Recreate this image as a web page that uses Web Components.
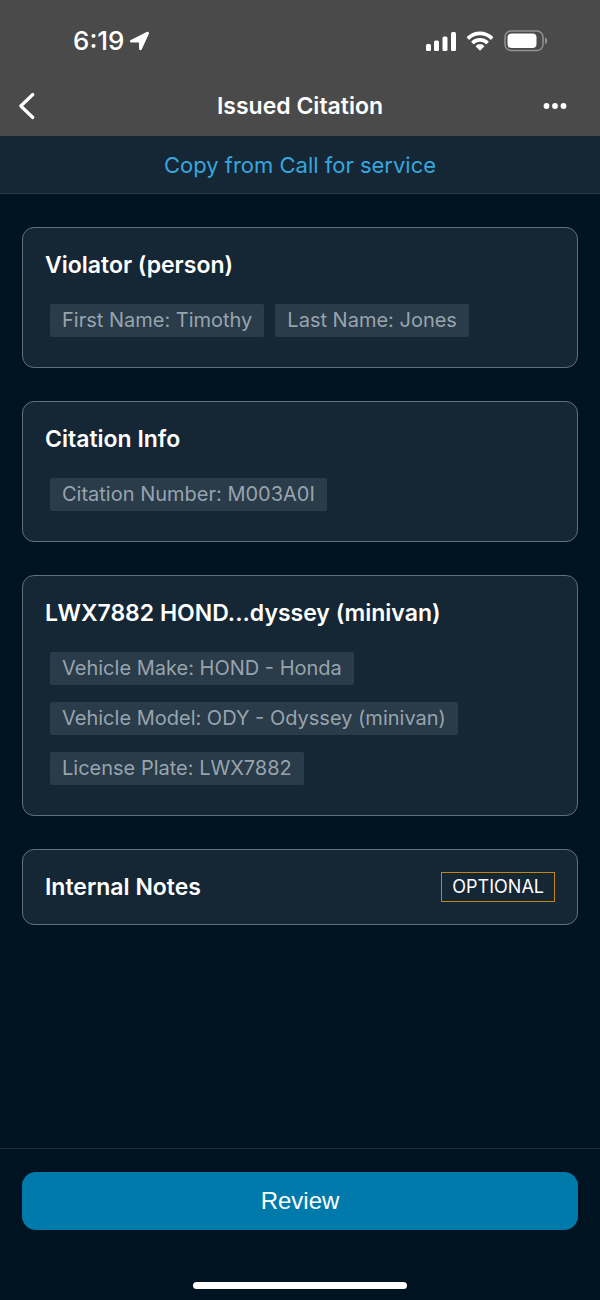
<!DOCTYPE html>
<html lang="en">
<head>
<meta charset="utf-8">
<meta name="viewport" content="width=device-width, initial-scale=1">
<title>Issued Citation</title>
<style>
	:root {
		--page: #001321;
		--surface: #152635;
		--bar: #4a4a4a;
		--line: #1f303d;
		--outline: #61707c;
		--chip: #2a3b49;
		--muted: #98a4ad;
		--link: #37a6de;
		--primary: #007aab;
		--warn: #c2870f;
		--gutter: 22px;
	}

	body {
		margin: 0;
		background: var(--page);
		color: #fff;
		font-family: Inter, "Liberation Sans", sans-serif;
	}
</style>
</head>
<body>
<citation-screen>
	<status-bar slot="top" time="6:19"></status-bar>
	<nav-bar slot="top">Issued Citation</nav-bar>
	<link-bar slot="top">Copy from Call for service</link-bar>

	<info-card heading="Violator (person)">
		<info-chip>First Name: Timothy</info-chip>
		<info-chip>Last Name: Jones</info-chip>
	</info-card>
	<info-card heading="Citation Info">
		<info-chip>Citation Number: M003A0I</info-chip>
	</info-card>
	<info-card heading="LWX7882 HOND...dyssey (minivan)">
		<info-chip>Vehicle Make: HOND - Honda</info-chip>
		<info-chip>Vehicle Model: ODY - Odyssey (minivan)</info-chip>
		<info-chip>License Plate: LWX7882</info-chip>
	</info-card>
	<info-card heading="Internal Notes">
		<tag-badge slot="badge">OPTIONAL</tag-badge>
	</info-card>

	<action-footer slot="bottom">Review</action-footer>
</citation-screen>

<script>
class CitationScreen extends HTMLElement {
	constructor() {
		super();
		this.attachShadow({ mode: "open" }).innerHTML = `
			<style>
				:host {
					display: flex;
					flex-direction: column;
					min-height: 100vh;
				}

				main {
					flex: 1;
					display: flex;
					flex-direction: column;
					gap: 33px;
					padding: 33px var(--gutter);
				}
			</style>
			<slot name="top"></slot>
			<main><slot></slot></main>
			<slot name="bottom"></slot>
		`;
	}
}

class StatusBar extends HTMLElement {
	constructor() {
		super();
		this.attachShadow({ mode: "open" }).innerHTML = `
			<style>
				:host {
					display: flex;
					align-items: center;
					justify-content: space-between;
					padding: 24px 52px 18px 73px;
					background: var(--bar);
				}

				.time, .icons { display: flex; align-items: center; }
				.time {
					gap: 5px;
					font-size: 26px;
					line-height: 34px;
					font-weight: 500;
				}
				.icons { gap: 10px; }
				svg { display: block; fill: #fff; }
			</style>
			<div class="time">
				<span>${this.getAttribute("time")}</span>
				<svg width="21" height="20" viewBox="0 0 21 20" aria-hidden="true">
					<path d="M1.800 9 17.600 1c1.700-.8 3 .4 2.200 2.100L12.800 18.300c-.7 1.500-2.600 1.200-2.700-.5l-.2-6.300-7.400-.1c-1.900 0-2.200-1.600-.7-2.400z"/>
				</svg>
			</div>
			<div class="icons">
				<svg width="32" height="20" viewBox="0 0 32 20" aria-hidden="true">
					<rect x="2" y="13" width="5" height="7" rx="1.500"/>
					<rect x="10" y="9.500" width="5" height="10.500" rx="1.500"/>
					<rect x="18.500" y="5.500" width="5" height="14.500" rx="1.500"/>
					<rect x="27" y="1" width="5" height="19" rx="1.500"/>
				</svg>
				<svg width="28" height="20" viewBox="0 0 28 20" aria-hidden="true">
					<path d="M14 .5c5 0 9.600 2 13 5.200.3.300.3.700 0 1l-1.700 1.700c-.3.300-.7.300-1 0A15 15 0 0 0 14 4.300 15 15 0 0 0 3.700 8.400c-.3.300-.7.300-1 0L1 6.700c-.3-.3-.3-.7 0-1A18.800 18.800 0 0 1 14 .5z"/>
					<path d="M14 7c3.200 0 6.200 1.200 8.500 3.300.3.300.3.700 0 1L20.700 13c-.3.300-.6.300-.9 0a8.600 8.600 0 0 0-11.600 0c-.3.300-.6.300-.9 0l-1.800-1.700c-.3-.3-.3-.7 0-1A12.500 12.500 0 0 1 14 7z"/>
					<path d="M14 13.300c1.500 0 2.900.5 4 1.400.3.300.3.700 0 1l-3.500 3.500c-.3.300-.7.300-1 0L10 15.700c-.3-.3-.3-.7 0-1 1.100-.9 2.500-1.400 4-1.400z"/>
				</svg>
				<svg width="44" height="22" viewBox="0 0 44 22" aria-hidden="true">
					<rect x="1" y="1" width="38" height="19.500" rx="6" fill="none" stroke="#929292" stroke-width="1.500"/>
					<rect x="3.500" y="3.500" width="29" height="14.500" rx="4"/>
					<path d="M41 7.500c3 1.200 3 5.500 0 6.700z" fill="#929292"/>
				</svg>
			</div>
		`;
	}
}

class NavBar extends HTMLElement {
	constructor() {
		super();
		this.attachShadow({ mode: "open" }).innerHTML = `
			<style>
				:host { display: block; }

				header {
					display: grid;
					grid-template-columns: 60px 1fr 60px;
					align-items: center;
					height: 60px;
					background: var(--bar);
				}

				h1 {
					margin: 0;
					font-size: 23px;
					line-height: 30px;
					font-weight: 600;
					text-align: center;
				}

				button {
					display: flex;
					align-items: center;
					height: 48px;
					margin: 0;
					padding: 0 18px;
					border: 0;
					background: none;
					color: inherit;
				}
				.menu {
					justify-content: flex-end;
					padding: 0 33px 0 0;
				}
				svg { display: block; flex: none; }
			</style>
			<header>
				<button type="button" aria-label="Back">
					<svg width="18" height="28" viewBox="0 0 18 28" fill="none" stroke="currentColor" stroke-width="3.200" stroke-linecap="round" stroke-linejoin="round">
						<path d="M14.800 2.500 2.800 14l12 11.500"/>
					</svg>
				</button>
				<h1><slot></slot></h1>
				<button class="menu" type="button" aria-label="More">
					<svg width="24" height="8" viewBox="0 0 24 8" fill="currentColor">
						<circle cx="3.500" cy="4" r="2.900"/>
						<circle cx="12" cy="4" r="2.900"/>
						<circle cx="20.500" cy="4" r="2.900"/>
					</svg>
				</button>
			</header>
		`;
	}
}

class LinkBar extends HTMLElement {
	constructor() {
		super();
		this.attachShadow({ mode: "open" }).innerHTML = `
			<style>
				:host { display: block; }

				button {
					display: block;
					width: 100%;
					margin: 0;
					padding: 14px 0 13px;
					border: 0;
					border-bottom: 1px solid var(--chip);
					background: var(--surface);
					color: var(--link);
					font: 400 22px/30px Inter, "Liberation Sans", sans-serif;
					text-align: center;
				}
			</style>
			<button type="button"><slot></slot></button>
		`;
	}
}

class InfoCard extends HTMLElement {
	constructor() {
		super();
		const chips = this.querySelector("info-chip") != null;
		this.attachShadow({ mode: "open" }).innerHTML = `
			<style>
				:host {
					display: block;
					border: 1px solid var(--outline);
					border-radius: 12px;
					background: var(--surface);
				}

				.head {
					display: flex;
					align-items: center;
					justify-content: space-between;
					padding: 22px;
				}

				h2 {
					margin: 0;
					font-size: 23px;
					line-height: 30px;
					font-weight: 600;
				}

				.chips {
					display: flex;
					flex-wrap: wrap;
					gap: 17px 11px;
					padding: 2px 27px 30px;
				}
				.chips[hidden] { display: none; }
			</style>
			<section>
				<div class="head">
					<h2>${this.getAttribute("heading")}</h2>
					<slot name="badge"></slot>
				</div>
				<div class="chips"${chips ? "" : " hidden"}><slot></slot></div>
			</section>
		`;
	}
}

class InfoChip extends HTMLElement {
	constructor() {
		super();
		this.attachShadow({ mode: "open" }).innerHTML = `
			<style>
				:host {
					display: block;
					padding: 0 12px;
					border-radius: 2px;
					background: var(--chip);
					color: var(--muted);
					font-size: 20px;
					line-height: 33px;
				}
			</style>
			<slot></slot>
		`;
	}
}

class TagBadge extends HTMLElement {
	constructor() {
		super();
		this.attachShadow({ mode: "open" }).innerHTML = `
			<style>
				:host {
					display: block;
					border: 1px solid var(--warn);
					padding: 0 10px;
					font-size: 18px;
					line-height: 28px;
				}
			</style>
			<slot></slot>
		`;
	}
}

class ActionFooter extends HTMLElement {
	constructor() {
		super();
		this.attachShadow({ mode: "open" }).innerHTML = `
			<style>
				:host {
					display: block;
					border-top: 1px solid var(--line);
					padding: 23px var(--gutter) 11px;
				}

				button {
					display: block;
					width: 100%;
					height: 58px;
					margin: 0;
					border: 0;
					border-radius: 14px;
					background: var(--primary);
					color: #fff;
					font: 400 24px/30px "Liberation Sans", sans-serif;
				}

				.home {
					width: 214px;
					height: 7px;
					margin: 52px auto 0;
					border-radius: 4px;
					background: #fff;
				}
			</style>
			<button type="button"><slot></slot></button>
			<div class="home"></div>
		`;
	}
}

customElements.define("citation-screen", CitationScreen);
customElements.define("status-bar", StatusBar);
customElements.define("nav-bar", NavBar);
customElements.define("link-bar", LinkBar);
customElements.define("info-card", InfoCard);
customElements.define("info-chip", InfoChip);
customElements.define("tag-badge", TagBadge);
customElements.define("action-footer", ActionFooter);
</script>
</body>
</html>
